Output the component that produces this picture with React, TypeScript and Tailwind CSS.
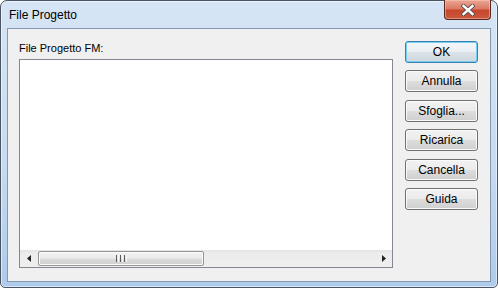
import React from "react";

const font = { fontFamily: '"Liberation Sans", Arial, sans-serif' };

function Btn({ label, def }: { label: string; def?: boolean }) {
  return (
    <div
      className={
        def
          ? "h-[22px] w-[73px] rounded-[3px] border border-[#3c7fb1] bg-[linear-gradient(180deg,#f4f7f9_0%,#e9eef2_50%,#dbe2e8_51%,#cfd8df_100%)] shadow-[inset_0_0_0_1px_#76cff0] flex items-center justify-center text-[12px] leading-[14px] text-black"
          : "h-[22px] w-[73px] rounded-[3px] border border-[#707070] bg-[linear-gradient(180deg,#f2f2f2_0%,#ebebeb_50%,#dddddd_51%,#cfcfcf_100%)] shadow-[inset_0_0_0_1px_#fbfbfb] flex items-center justify-center text-[12px] leading-[14px] text-black"
      }
    >
      {label}
    </div>
  );
}

export default function App() {
  return (
    <div className="w-[498px] h-[288px] bg-white" style={font}>
      <div className="w-full h-full rounded-t-[7px] rounded-b-[5px] border border-[#4a5563] bg-[linear-gradient(180deg,#d6e5f5_0%,#c8dbf0_55%,#aecbeb_100%)] shadow-[inset_0_0_0_1px_rgba(255,255,255,0.55)] flex flex-col">
        {/* title bar */}
        <div className="h-[27px] flex items-start justify-between">
          <div className="ml-[8px] mt-[7px] text-[12px] leading-[14px] text-black">File Progetto</div>
          <div className="mr-[6px] -mt-[1px] w-[47px] h-[20px] rounded-b-[4px] border border-t-0 border-[#5a2a22] bg-[linear-gradient(180deg,#e9a795_0%,#dc7a63_45%,#c8462c_55%,#c95a3e_100%)] shadow-[inset_0_0_0_1px_rgba(255,210,200,0.45)] flex items-center justify-center">
            <svg width="14" height="12" viewBox="0 0 14 12">
              <path d="M2.5 2 L11.5 10 M11.5 2 L2.5 10" stroke="#4b4b4b" strokeWidth="4.2" strokeLinecap="square" />
              <path d="M2.5 2 L11.5 10 M11.5 2 L2.5 10" stroke="#ffffff" strokeWidth="2.4" strokeLinecap="square" />
            </svg>
          </div>
        </div>
        {/* client area */}
        <div className="mx-[6px] mb-[5px] flex-1 border border-[#8498b0] bg-[#f0f0f0] flex">
          <div className="pl-[11px] pt-[13px] flex flex-col">
            <div className="text-[11px] leading-[13px] text-black">File Progetto FM:</div>
            <div className="mt-[4px] w-[374px] h-[209px] border border-[#828790] bg-white flex flex-col">
              <div className="flex-1" />
              <div className="h-[17px] flex bg-[linear-gradient(180deg,#e3e3e3_0%,#ececec_20%,#efefef_100%)]">
                <div className="w-[17px] h-full flex items-center justify-center">
                  <svg width="4" height="7" viewBox="0 0 4 7">
                    <path d="M4 0 L0 3.5 L4 7 Z" fill="#222" />
                  </svg>
                </div>
                <div className="ml-[1px] my-[1px] w-[166px] rounded-[2px] border border-[#959595] bg-[linear-gradient(180deg,#f3f3f3_0%,#e8e8e8_50%,#dadada_51%,#d0d0d0_100%)] shadow-[inset_0_0_0_1px_#fafafa] flex items-center justify-center gap-[1px]">
                  <div className="w-[1px] h-[7px] bg-[#5a5a5a]" />
                  <div className="w-[1px] h-[7px] bg-[#f6f6f6]" />
                  <div className="w-[1px] h-[7px] bg-[#5a5a5a]" />
                  <div className="w-[1px] h-[7px] bg-[#f6f6f6]" />
                  <div className="w-[1px] h-[7px] bg-[#5a5a5a]" />
                  <div className="w-[1px] h-[7px] bg-[#f6f6f6]" />
                </div>
                <div className="flex-1" />
                <div className="w-[17px] h-full flex items-center justify-center">
                  <svg width="4" height="7" viewBox="0 0 4 7">
                    <path d="M0 0 L4 3.5 L0 7 Z" fill="#222" />
                  </svg>
                </div>
              </div>
            </div>
          </div>
          <div className="ml-[12px] pt-[12px] flex flex-col gap-[7.4px]">
            <Btn label="OK" def />
            <Btn label="Annulla" />
            <Btn label="Sfoglia..." />
            <Btn label="Ricarica" />
            <Btn label="Cancella" />
            <Btn label="Guida" />
          </div>
        </div>
      </div>
    </div>
  );
}
